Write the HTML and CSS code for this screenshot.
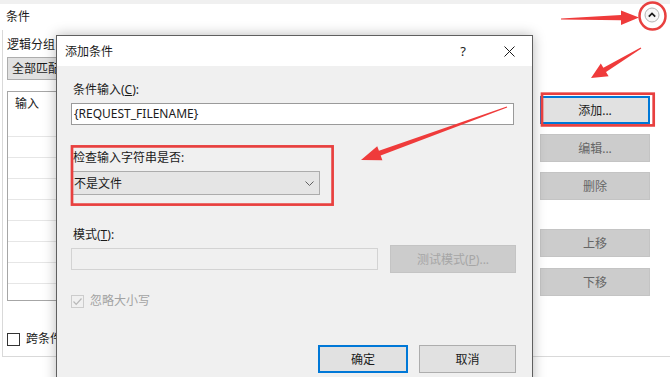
FILE: index.html
```html
<!DOCTYPE html>
<html lang="zh-CN">
<head>
    <meta charset="UTF-8">
    <title>添加条件</title>
    <link rel="stylesheet" href="styles.css">
</head>
<body>
<div class="page">
    <div class="top-strip"></div>
    <div class="section-head">
        <span>条件</span>
        <span class="collapse">
            <svg width="16" height="16" viewBox="0 0 16 16">
                <circle cx="8" cy="8" r="7" fill="#f6f6f6" stroke="#b4b4b4" stroke-width="1"/>
                <path d="M4.8 9.6 L8 6.4 L11.2 9.6" fill="none" stroke="#1a1a1a" stroke-width="1.8"/>
            </svg>
        </span>
    </div>

    <div class="group">
        <div class="group-main">
            <div class="label">逻辑分组</div>
            <div class="combo">全部匹配</div>
            <div class="listbox">
                <div class="list-head">输入</div>
                <div class="list-row"></div>
                <div class="list-row"></div>
                <div class="list-row"></div>
                <div class="list-row"></div>
                <div class="list-row"></div>
                <div class="list-row"></div>
                <div class="list-row"></div>
            </div>
            <div class="check-row">
                <span class="checkbox"></span>
                <span>跨条件跟踪捕获组</span>
            </div>
        </div>
        <div class="group-side">
            <div class="btn side-add focused">添加...</div>
            <div class="btn side-edit disabled">编辑...</div>
            <div class="btn side-del disabled">删除</div>
            <div class="btn side-up disabled">上移</div>
            <div class="btn side-down disabled">下移</div>
        </div>
    </div>

    <!-- dialog window over the page -->
    <div class="dialog">
        <div class="title-bar">
            <span class="title">添加条件</span>
            <span class="title-btns">
                <span class="title-btn">?</span>
                <span class="title-btn">
                    <svg width="11" height="11" viewBox="0 0 11 11">
                        <path d="M0.5 0.5 L10.5 10.5 M10.5 0.5 L0.5 10.5" stroke="#1a1a1a" stroke-width="1"/>
                    </svg>
                </span>
            </span>
        </div>
        <div class="dialog-body">
            <div class="label first">条件输入(<u>C</u>):</div>
            <div class="textbox">{REQUEST_FILENAME}</div>

            <div class="label check-label">检查输入字符串是否:</div>
            <div class="dropdown">
                <span>不是文件</span>
                <svg width="9" height="5" viewBox="0 0 9 5">
                    <path d="M0.5 0.5 L4.5 4.5 L8.5 0.5" fill="none" stroke="#606060" stroke-width="1"/>
                </svg>
            </div>

            <div class="label pattern-label">模式(<u>T</u>):</div>
            <div class="pattern-row">
                <div class="textbox disabled-box"></div>
                <div class="btn test-btn disabled">测试模式(<u>P</u>)...</div>
            </div>

            <div class="check-row dlg-check">
                <span class="checkbox dim">
                    <svg width="11" height="11" viewBox="0 0 11 11">
                        <path d="M1.5 5.5 L4.2 8.3 L9.5 2.5" fill="none" stroke="#b8b8b8" stroke-width="1.2"/>
                    </svg>
                </span>
                <span class="dim-text">忽略大小写</span>
            </div>

            <div class="footer">
                <div class="btn ok-btn focused">确定</div>
                <div class="btn cancel-btn">取消</div>
            </div>
        </div>
    </div>

    <!-- red annotation marks -->
    <svg class="marks" width="670" height="377" viewBox="0 0 670 377">
        <ellipse cx="652.5" cy="16" rx="13" ry="13.5" fill="none" stroke="#e8403f" stroke-width="2.5"/>
        <rect x="542" y="93.7" width="111.7" height="31.7" fill="none" stroke="#e8403f" stroke-width="2.7"/>
        <rect x="72" y="146.4" width="260.6" height="58.2" fill="none" stroke="#e8403f" stroke-width="2.7"/>
        <polygon fill="#ef3b3b" points="561,18.5 621,15 621,10.5 639,17.5 621,25 621,20.2 561,19.5"/>
        <polygon fill="#ef3b3b" points="640.7,47.6 603.4,67.7 600.8,63.4 591,78 608.6,76.2 606,71.9 641.3,48.4"/>
        <polygon fill="#ef3b3b" points="506.8,106.5 378.95,150.85 377.2,146.15 361,160 382.4,160.25 380.65,155.55 507.2,107.5"/>
    </svg>
</div>
</body>
</html>
```

FILE: styles.css
```css
* {
    box-sizing: border-box;
}
body {
    margin: 0;
    background: #ffffff;
    font-family: "Noto Sans", "Noto Sans CJK SC", sans-serif;
    font-size: 12px;
    color: #1b1b1b;
    overflow: hidden;
}
.page {
    position: relative;
    width: 670px;
    height: 377px;
    overflow: hidden;
}
.top-strip {
    height: 4px;
    background: #f0f0f0;
}
.section-head {
    height: 26px;
    display: flex;
    align-items: center;
    justify-content: space-between;
    padding: 0 10px 0 6px;
    line-height: 16px;
}
.collapse {
    display: flex;
    margin-top: -4px;
}
.label {
    height: 16px;
    line-height: 16px;
    white-space: nowrap;
}

/* background page */
.group {
    display: flex;
    height: 327px;
    margin-left: 2px;
    border-left: 1px solid #d9d9d9;
    border-bottom: 1px solid #d9d9d9;
}
.group-main {
    flex: 0 0 537px;
    padding-left: 4px;
    padding-top: 7px;
}
.combo {
    margin-top: 4px;
    width: 500px;
    height: 23px;
    line-height: 21px;
    padding-left: 4px;
    background: #e1e1e1;
    border: 1px solid #adadad;
}
.listbox {
    margin-top: 11px;
    width: 520px;
    height: 210px;
    background: #fff;
    border: 1px solid #a6a6a6;
}
.list-head {
    height: 45px;
    padding: 4px 0 0 7px;
    line-height: 16px;
    border-bottom: 1px solid #e6e6e6;
}
.list-row {
    height: 21px;
    border-bottom: 1px solid #e6e6e6;
}
.check-row {
    display: flex;
    align-items: center;
    height: 16px;
    line-height: 16px;
    margin-top: 30px;
    white-space: nowrap;
}
.checkbox {
    display: flex;
    align-items: center;
    justify-content: center;
    width: 13px;
    height: 13px;
    margin-right: 6px;
    border: 1px solid #333;
    background: #fff;
}
.checkbox.dim {
    border-color: #cccccc;
    background: #f0f0f0;
}
.dim-text {
    color: #a3a3a3;
}

.group-side {
    width: 110px;
    padding-top: 66px;
}
.btn {
    height: 28px;
    display: flex;
    align-items: center;
    justify-content: center;
    background: #e1e1e1;
    border: 1px solid #adadad;
    white-space: nowrap;
}
.btn.disabled {
    background: #cccccc;
    border-color: #c4c4c4;
    color: #666666;
}
.btn.focused {
    border: 2px solid #0078d7;
}
.side-edit,
.side-del {
    margin-top: 10px;
}
.side-up {
    margin-top: 29px;
}
.side-down {
    margin-top: 11px;
}

/* dialog */
.dialog {
    position: absolute;
    left: 56px;
    top: 35px;
    width: 477px;
    height: 360px;
    background: #f0f0f0;
    border: 1px solid #5f5f5f;
    box-shadow: 0 0 12px rgba(0, 0, 0, 0.28);
}
.title-bar {
    height: 30px;
    background: #fff;
    display: flex;
    align-items: center;
    justify-content: space-between;
    padding-left: 8px;
}
.title-btns {
    display: flex;
}
.title-btn {
    width: 46px;
    height: 30px;
    display: flex;
    align-items: center;
    justify-content: center;
    font-size: 13px;
}
.dialog-body {
    padding: 0 16px 0 14px;
}
.dialog-body .label {
    padding-left: 2px;
}
.label.first {
    margin-top: 16px;
}
.textbox {
    margin-top: 5px;
    width: 443px;
    height: 22px;
    line-height: 20px;
    padding-left: 2px;
    background: #fff;
    border: 1px solid #9a9a9a;
}
.check-label {
    margin-top: 25px;
}
.dropdown {
    margin-top: 5px;
    width: 249px;
    height: 24px;
    display: flex;
    align-items: center;
    justify-content: space-between;
    padding: 0 5px 0 2px;
    background: #e5e5e5;
    border: 1px solid #acacac;
}
.pattern-label {
    margin-top: 32px;
}
.pattern-row {
    margin-top: 2px;
    height: 28px;
    display: flex;
    align-items: center;
}
.pattern-row .textbox {
    margin-top: 0;
}
.textbox.disabled-box {
    width: 307px;
    background: #f0f0f0;
    border-color: #d3d3d3;
}
.test-btn {
    width: 126px;
    margin-left: 12px;
}
.btn.test-btn {
    color: #a6a6a6;
}
.dlg-check {
    margin-top: 20px;
}
.footer {
    margin-top: 36px;
    display: flex;
    justify-content: flex-end;
    gap: 11px;
}
.ok-btn {
    width: 90px;
}
.cancel-btn {
    width: 97px;
}

.marks {
    position: absolute;
    left: 0;
    top: 0;
    pointer-events: none;
}
```
